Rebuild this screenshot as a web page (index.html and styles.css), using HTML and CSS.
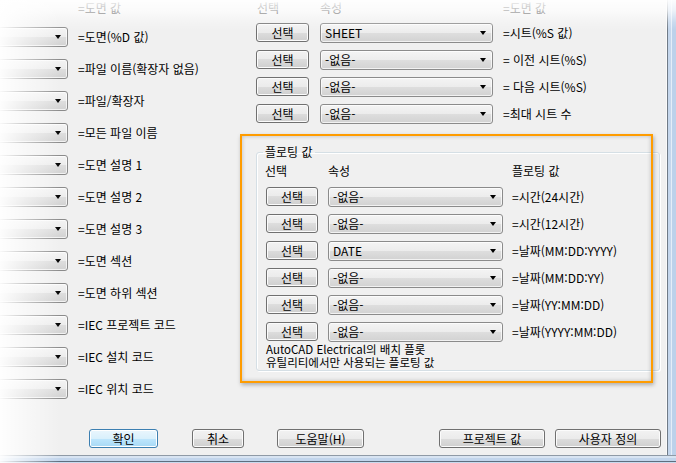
FILE: index.html
```html
<!DOCTYPE html>
<html lang="ko">
<head>
<meta charset="utf-8">
<title>도면 값</title>
<link rel="stylesheet" href="styles.css">
</head>
<body>
<div class="screen">
  <div class="window">
    <div class="client">
      <div class="main">
        <div class="left">
          <div class="hdr left-hdr">=도면 값</div>
          <div class="lrow"><div class="combo wide"></div><span class="lbl">=도면(%D 값)</span></div>
          <div class="lrow"><div class="combo wide"></div><span class="lbl">=파일 이름(확장자 없음)</span></div>
          <div class="lrow"><div class="combo wide"></div><span class="lbl">=파일/확장자</span></div>
          <div class="lrow"><div class="combo wide"></div><span class="lbl">=모든 파일 이름</span></div>
          <div class="lrow"><div class="combo wide"></div><span class="lbl">=도면 설명 1</span></div>
          <div class="lrow"><div class="combo wide"></div><span class="lbl">=도면 설명 2</span></div>
          <div class="lrow"><div class="combo wide"></div><span class="lbl">=도면 설명 3</span></div>
          <div class="lrow"><div class="combo wide"></div><span class="lbl">=도면 섹션</span></div>
          <div class="lrow"><div class="combo wide"></div><span class="lbl">=도면 하위 섹션</span></div>
          <div class="lrow"><div class="combo wide"></div><span class="lbl">=IEC 프로젝트 코드</span></div>
          <div class="lrow"><div class="combo wide"></div><span class="lbl">=IEC 설치 코드</span></div>
          <div class="lrow"><div class="combo wide"></div><span class="lbl">=IEC 위치 코드</span></div>
        </div>
        <div class="right">
          <div class="top-grid">
            <div class="hdr h-sel">선택</div><div class="hdr">속성</div><div class="hdr">=도면 값</div>
            <button class="btn sel">선택</button><div class="combo mid">SHEET</div><span class="lbl">=시트(%S 값)</span>
            <button class="btn sel">선택</button><div class="combo mid">-없음-</div><span class="lbl">= 이전 시트(%S)</span>
            <button class="btn sel">선택</button><div class="combo mid">-없음-</div><span class="lbl">= 다음 시트(%S)</span>
            <button class="btn sel">선택</button><div class="combo mid">-없음-</div><span class="lbl">=최대 시트 수</span>
          </div>
          <fieldset class="group">
            <legend>플로팅 값</legend>
            <div class="grp-grid">
              <div class="hdr g-sel">선택</div><div class="hdr">속성</div><div class="hdr">플로팅 값</div>
              <button class="btn gsel">선택</button><div class="combo gcombo">-없음-</div><span class="lbl">=시간(24시간)</span>
              <button class="btn gsel">선택</button><div class="combo gcombo">-없음-</div><span class="lbl">=시간(12시간)</span>
              <button class="btn gsel">선택</button><div class="combo gcombo">DATE</div><span class="lbl">=날짜(MM:DD:YYYY)</span>
              <button class="btn gsel">선택</button><div class="combo gcombo">-없음-</div><span class="lbl">=날짜(MM:DD:YY)</span>
              <button class="btn gsel">선택</button><div class="combo gcombo">-없음-</div><span class="lbl">=날짜(YY:MM:DD)</span>
              <button class="btn gsel">선택</button><div class="combo gcombo">-없음-</div><span class="lbl">=날짜(YYYY:MM:DD)</span>
            </div>
            <div class="note"><div class="note-line">AutoCAD Electrical의 배치 플롯</div><div class="note-line">유틸리티에서만 사용되는 플로팅 값</div></div>
          </fieldset>
        </div>
      </div>
      <div class="buttons">
        <button class="btn default b-ok">확인</button>
        <button class="btn b-cancel">취소</button>
        <button class="btn b-help">도움말(H)</button>
        <button class="btn b-proj">프로젝트 값</button>
        <button class="btn b-user">사용자 정의</button>
      </div>
      <div class="highlight"></div>
    </div>
    <div class="frame-right"></div>
  </div>
  <div class="frame-bottom"></div>
  <div class="fade-top"></div>
  <div class="fade-left"></div>
</div>
</body>
</html>
```

FILE: styles.css
```css
html, body {
  margin: 0;
  padding: 0;
}
body {
  width: 676px;
  height: 463px;
  overflow: hidden;
  background: #f0f0f0;
  font-family: "Noto Sans CJK KR", "Liberation Sans", sans-serif;
  font-size: 12px;
  color: #000;
}
.screen {
  position: relative;
  width: 676px;
  height: 463px;
  overflow: hidden;
}
.window {
  display: flex;
  height: 455px;
}
.client {
  position: relative;
  width: 666px;
  height: 455px;
  background: #f0f0f0;
  display: flex;
  flex-direction: column;
}
.main {
  display: flex;
  height: 429px;
  overflow: hidden;
}
.left {
  width: 256px;
  flex: none;
  display: flex;
  flex-direction: column;
}
.hdr {
  line-height: 16px;
  white-space: nowrap;
}
.left-hdr {
  height: 21px;
  padding-left: 78px;
}
.lrow {
  height: 32px;
  display: flex;
  align-items: center;
  gap: 10px;
}
.lbl {
  white-space: nowrap;
  line-height: 16px;
}
.combo {
  box-sizing: border-box;
  position: relative;
  height: 20px;
  border: 1px solid #8b8b8b;
  border-radius: 3px;
  background: linear-gradient(#f4f4f4, #ececec 50%, #dedede 50%, #d2d2d2);
  box-shadow: inset 0 0 0 1px rgba(255,255,255,0.7);
  padding-left: 4px;
  line-height: 18px;
  white-space: nowrap;
}
.combo::after {
  content: "";
  position: absolute;
  right: 6px;
  top: 7px;
  border-style: solid;
  border-width: 4px 3.5px 0 3.5px;
  border-color: #000 transparent transparent transparent;
}
.combo.wide {
  width: 120px;
  margin-left: -52px;
  flex: none;
}
.right {
  display: flex;
  flex-direction: column;
}
.top-grid {
  display: grid;
  grid-template-columns: 64px 183px auto;
  grid-template-rows: 19px repeat(4, 27px);
  align-items: center;
}
.top-grid .hdr {
  align-self: start;
}
.h-sel {
  padding-left: 1px;
}
.btn {
  box-sizing: border-box;
  height: 19px;
  margin: 0;
  padding: 0;
  border: 1px solid #707070;
  border-radius: 3px;
  background: linear-gradient(#f2f2f2, #ebebeb 50%, #dddddd 50%, #cfcfcf);
  box-shadow: inset 0 0 0 1px #fbfbfb;
  font-family: "Noto Sans CJK KR", "Liberation Sans", sans-serif;
  font-size: 12px;
  line-height: 16px;
  color: #000;
  text-align: center;
}
.btn.sel {
  width: 53px;
}
.combo.mid {
  width: 173px;
}
.group {
  box-sizing: border-box;
  width: 404px;
  min-width: 0;
  margin: 18px 0 0 0;
  padding: 0 0 1px 9px;
  border: 1px solid #d5dfe5;
  border-radius: 3px;
  box-shadow: inset 1px 1px 0 #fff, 1px 1px 0 #fff;
}
.group legend {
  padding: 0 2px;
  margin-left: -3px;
  line-height: 14px;
}
.grp-grid {
  display: grid;
  grid-template-columns: 62px 184px auto;
  grid-template-rows: 24px repeat(6, 27px);
  align-items: center;
}
.g-sel {
  margin-left: -1px;
}
.btn.gsel {
  width: 52px;
}
.combo.gcombo {
  width: 175px;
}
.note {
  margin-top: -2px;
  display: flex;
  flex-direction: column;
}
.note-line {
  height: 13px;
  line-height: 13px;
  font-size: 11.5px;
  white-space: nowrap;
}
.buttons {
  display: flex;
  padding-left: 89px;
}
.b-ok { width: 69px; }
.b-cancel { width: 52px; margin-left: 34px; }
.b-help { width: 87px; margin-left: 33px; }
.b-proj { width: 106px; margin-left: 75px; }
.b-user { width: 106px; margin-left: 10px; }
.btn.default {
  border-color: #3c7fb1;
  background: linear-gradient(#eaf6fd, #d9f0fc 50%, #bee6fd 50%, #a7d9f5);
  box-shadow: inset 0 0 0 1px #ffffff;
}
.highlight {
  position: absolute;
  left: 240px;
  top: 134px;
  width: 413px;
  height: 249px;
  box-sizing: border-box;
  border: 2px solid #ff9c00;
  box-shadow: 1px 2px 4px rgba(0,0,0,0.28), inset 0 0 4px rgba(0,0,0,0.22);
  pointer-events: none;
}
.frame-right {
  width: 10px;
  flex: none;
  background: linear-gradient(to right, #fafafa 0 1px, #6f7a86 1px 2px, #c4d6ec 2px 5px, #e4edf8 5px 6px, #bcd1ea 6px);
}
.frame-bottom {
  height: 8px;
  background: linear-gradient(#8f9aa6 0 1px, #d8e4f2 1px 3px, #c2d5ec 3px 6px, #5f6e7e 6px 7px, #c9daee 7px);
}
.fade-top {
  position: absolute;
  left: 0;
  top: 0;
  width: 676px;
  height: 30px;
  background: linear-gradient(rgba(255,255,255,0.95), rgba(255,255,255,0.72) 35%, rgba(255,255,255,0.2) 75%, rgba(255,255,255,0));
  pointer-events: none;
}
.fade-left {
  position: absolute;
  left: 0;
  top: 0;
  width: 60px;
  height: 463px;
  background: linear-gradient(to right, rgba(255,255,255,0.95), rgba(255,255,255,0.55) 40%, rgba(255,255,255,0));
  pointer-events: none;
}
```
